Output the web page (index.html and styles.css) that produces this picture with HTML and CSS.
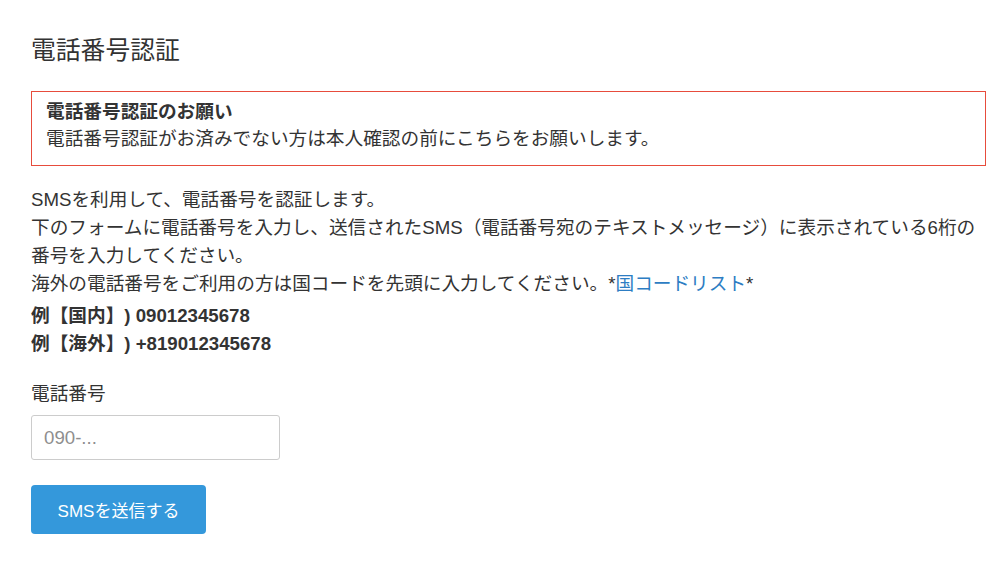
FILE: index.html
```html
<!DOCTYPE html>
<html lang="ja">
<head>
<meta charset="utf-8">
<title>電話番号認証</title>
<link rel="stylesheet" href="styles.css">
</head>
<body>
<div class="page">
  <h1 class="title">電話番号認証</h1>
  <div class="notice">
    <div class="notice-title">電話番号認証のお願い</div>
    <div class="notice-text">電話番号認証がお済みでない方は本人確認の前にこちらをお願いします。</div>
  </div>
  <p class="desc">SMSを利用して、電話番号を認証します。<br>下のフォームに電話番号を入力し、送信されたSMS（電話番号宛のテキストメッセージ）に表示されている6桁の番号を入力してください。<br>海外の電話番号をご利用の方は国コードを先頭に入力してください。*<a class="link" href="#">国コードリスト</a>*</p>
  <p class="examples">例【国内】) 09012345678<br>例【海外】) +819012345678</p>
  <form class="form">
    <label class="label" for="tel">電話番号</label>
    <input class="input" id="tel" type="text" placeholder="090-...">
    <button class="btn" type="button">SMSを送信する</button>
  </form>
</div>
</body>
</html>
```
FILE: styles.css
```css
html, body {
  margin: 0;
  padding: 0;
  background: #fff;
}
body {
  font-family: "Liberation Sans", Arial, "Noto Sans CJK JP", sans-serif;
  color: #333;
  font-size: 18.67px;
  line-height: 28px;
  text-spacing-trim: space-all;
}
.page {
  width: 955px;
  padding: 33px 0 0 31px;
}
.title {
  margin: 0;
  font-size: 24.8px;
  line-height: 36px;
  font-weight: normal;
  color: #333;
}
.notice {
  margin-top: 22px;
  border: 1px solid #e74c3c;
  padding: 6px 14px 12px;
}
.notice-title {
  font-weight: bold;
  line-height: 27px;
}
.notice-text {
  line-height: 28px;
}
.desc {
  margin: 20px 0 0;
}
.link {
  color: #2d7dc3;
  text-decoration: none;
}
.examples {
  margin: 4px 0 0;
  font-weight: bold;
}
.form {
  display: flex;
  flex-direction: column;
  align-items: flex-start;
  margin-top: 22px;
}
.label {
  line-height: 28px;
}
.input {
  margin-top: 7px;
  box-sizing: border-box;
  width: 249px;
  height: 45px;
  border: 1px solid #ccc;
  border-radius: 3px;
  padding: 0 12px;
  font-family: "Liberation Sans", Arial, sans-serif;
  font-size: 18.67px;
  color: #333;
  outline: none;
}
.input::placeholder {
  color: #8e8e8e;
}
.btn {
  margin-top: 25px;
  box-sizing: border-box;
  width: 175px;
  height: 49px;
  border: 0;
  border-radius: 4px;
  background: #3498db;
  color: #fff;
  font-family: "Liberation Sans", Arial, "Noto Sans CJK JP", sans-serif;
  font-size: 17px;
  padding: 0;
  cursor: pointer;
  text-spacing-trim: space-all;
}
```
